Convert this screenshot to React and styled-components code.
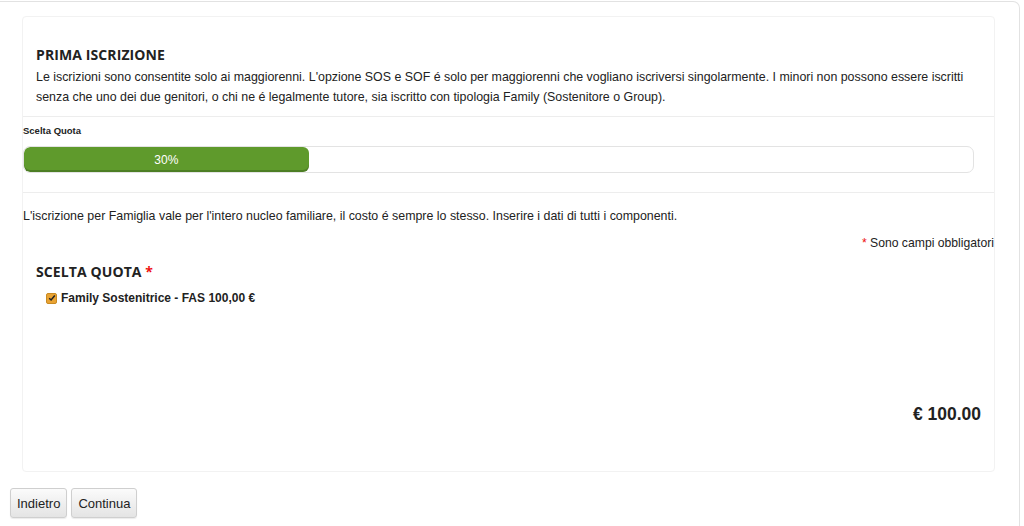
import styled, { createGlobalStyle } from "styled-components";

const GlobalStyle = createGlobalStyle`
  body {
    margin: 0;
    background: #fff;
    font-family: "Liberation Sans", Arial, sans-serif;
    color: #222;
  }
`;

const Page = styled.div`
  width: 1020px;
  height: 540px;
  margin-top: 1px;
  border: 1px solid #e2e2e2;
  border-left: 0;
  border-radius: 0 7px 0 0;
  box-sizing: border-box;
  padding-top: 14px;
`;

const Panel = styled.div`
  margin-left: 22px;
  width: 973px;
  height: 456px;
  box-sizing: border-box;
  border: 1px solid #f2f2f2;
  border-radius: 4px;
  display: flex;
  flex-direction: column;
`;

const Intro = styled.div`
  padding: 28px 13px 9px 13px;
`;

const Heading = styled.h2`
  margin: 0 0 2px;
  font-family: "Open Sans", sans-serif;
  font-weight: 700;
  font-size: 14px;
  line-height: 20px;
  color: #222;
  text-transform: uppercase;
  letter-spacing: 0.1px;
  span {
    color: #e11;
  }
`;

const Text = styled.p`
  margin: 0;
  font-size: 12.4px;
  line-height: 20px;
  color: #222;
`;

const Divider = styled.hr`
  margin: 0;
  border: 0;
  border-top: 1px solid #ededed;
`;

const Progress = styled.div`
  padding: 7px 20px 19px 0;
`;

const SmallLabel = styled.div`
  font-size: 9.5px;
  font-weight: 700;
  line-height: 13px;
  margin-bottom: 9px;
`;

const Track = styled.div`
  height: 27px;
  box-sizing: border-box;
  border: 1px solid #e3e3e3;
  border-radius: 7px;
  background: #fff;
  overflow: hidden;
`;

const Fill = styled.div`
  height: 100%;
  border-radius: 6px;
  background: #5f9a2c;
  box-shadow: inset 0 -2px 0 rgba(0, 0, 0, 0.18);
  color: #fff;
  font-size: 12px;
  display: flex;
  align-items: center;
  justify-content: center;
`;

const Body = styled.div`
  padding-top: 13px;
  flex: 1;
  display: flex;
  flex-direction: column;
`;

const Required = styled.div`
  text-align: right;
  font-size: 12.2px;
  line-height: 20px;
  margin-top: 7px;
  span {
    color: #e11;
  }
`;

const Section = styled.div`
  padding: 9px 13px 0;
`;

const Option = styled.label`
  display: flex;
  align-items: center;
  gap: 4px;
  margin: 9px 0 0 10px;
  font-size: 12px;
  font-weight: 700;
  color: #222;
`;

const Check = styled.span`
  width: 9px;
  height: 9px;
  border-radius: 2px;
  background: #e9a333;
  border: 1px solid #c98a22;
  display: flex;
  align-items: center;
  justify-content: center;
`;

const Total = styled.div`
  margin-top: auto;
  margin-bottom: 46px;
  text-align: right;
  padding-right: 13px;
  font-size: 17.5px;
  font-weight: 700;
  color: #222;
`;

const Actions = styled.div`
  display: flex;
  gap: 4px;
  padding: 16px 0 0 10px;
`;

const Button = styled.button`
  height: 30px;
  padding: 0 6px;
  font-family: "Liberation Sans", Arial, sans-serif;
  font-size: 13px;
  color: #222;
  border: 1px solid #cfcfcf;
  border-radius: 3px;
  background: linear-gradient(#fbfbfb, #e4e4e4);
  box-shadow: 0 1px 1px rgba(0, 0, 0, 0.08);
`;

export default function App() {
  return (
    <>
      <GlobalStyle />
      <Page>
        <Panel>
          <Intro>
            <Heading>Prima iscrizione</Heading>
            <Text>
              Le iscrizioni sono consentite solo ai maggiorenni. L'opzione SOS e SOF é solo per maggiorenni che
              vogliano iscriversi singolarmente. I minori non possono essere iscritti senza che uno dei due
              genitori, o chi ne é legalmente tutore, sia iscritto con tipologia Family (Sostenitore o Group).
            </Text>
          </Intro>
          <Divider />
          <Progress>
            <SmallLabel>Scelta Quota</SmallLabel>
            <Track>
              <Fill style={{ width: "30%" }}>30%</Fill>
            </Track>
          </Progress>
          <Divider />
          <Body>
            <Text>
              L'iscrizione per Famiglia vale per l'intero nucleo familiare, il costo é sempre lo stesso. Inserire i
              dati di tutti i componenti.
            </Text>
            <Required>
              <span>*</span> Sono campi obbligatori
            </Required>
            <Section>
              <Heading>
                Scelta quota <span>*</span>
              </Heading>
              <Option>
                <Check>
                  <svg width="8" height="8" viewBox="0 0 8 8">
                    <path d="M1.2 4.2 L3.1 6 L6.8 1.6" fill="none" stroke="#222" strokeWidth="1.5" />
                  </svg>
                </Check>
                Family Sostenitrice - FAS 100,00 €
              </Option>
            </Section>
            <Total>€ 100.00</Total>
          </Body>
        </Panel>
        <Actions>
          <Button>Indietro</Button>
          <Button>Continua</Button>
        </Actions>
      </Page>
    </>
  );
}
